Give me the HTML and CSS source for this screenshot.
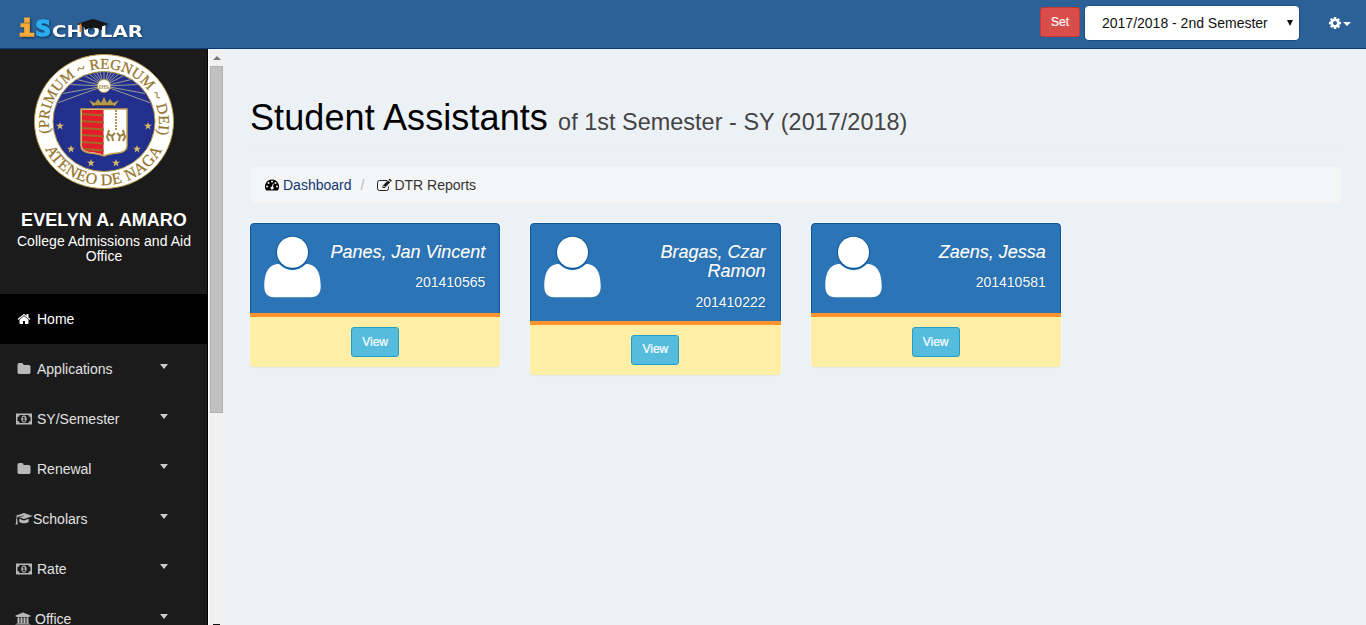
FILE: index.html
```html
<!DOCTYPE html>
<html lang="en">
<head>
<meta charset="utf-8">
<title>iScholar</title>
<link rel="stylesheet" href="styles.css">
</head>
<body>
<svg class="defs" aria-hidden="true">
  <symbol id="folder" viewBox="0 0 1792 1792"><path d="M1728 608v704q0 92-66 158t-158 66h-1216q-92 0-158-66t-66-158v-960q0-92 66-158t158-66h320q92 0 158 66t66 158v32h672q92 0 158 66t66 158z"/></symbol>
  <symbol id="home" viewBox="0 0 1792 1792"><path d="M1472 992v480q0 26-19 45t-45 19h-384v-384h-256v384h-384q-26 0-45-19t-19-45v-480q0-1 .5-3t.5-3l575-474 575 474q1 2 1 6zm223-69l-62 74q-8 9-21 11h-3q-13 0-21-7l-692-577-692 577q-12 8-24 7-13-2-21-11l-62-74q-8-10-7-23.5t11-21.5l719-599q32-26 76-26t76 26l244 204v-195q0-14 9-23t23-9h192q14 0 23 9t9 23v408l219 182q10 8 11 21.5t-7 23.5z"/></symbol>
  <symbol id="cog" viewBox="0 0 1792 1792"><path d="M1152 896q0-106-75-181t-181-75-181 75-75 181 75 181 181 75 181-75 75-181zm512-109v222q0 12-8 23t-20 13l-185 28q-19 54-39 91 35 50 107 138 10 12 10 25t-9 23q-27 37-99 108t-94 71q-12 0-26-9l-138-108q-44 23-91 38-16 136-29 186-7 28-36 28h-222q-14 0-24.5-8.5t-11.5-21.5l-28-184q-49-16-90-37l-141 107q-10 9-25 9-14 0-25-11-126-114-165-168-7-10-7-23 0-12 8-23 15-21 51-66.5t54-70.5q-27-50-41-99l-183-27q-13-2-21-12.5t-8-23.5v-222q0-12 8-23t19-13l186-28q14-46 39-92-40-57-107-138-10-12-10-24 0-10 9-23 26-36 98.5-107.5t94.5-71.5q13 0 26 10l138 107q44-23 91-38 16-136 29-186 7-28 36-28h222q14 0 24.5 8.5t11.5 21.5l28 184q49 16 90 37l142-107q9-9 24-9 13 0 25 10 129 119 165 170 7 8 7 22 0 12-8 23-15 21-51 66.5t-54 70.5q26 50 41 98l183 28q13 2 21 12.5t8 23.5z"/></symbol>
  <symbol id="money" viewBox="0 0 16 14"><path fill-rule="evenodd" d="M0 1.500h16v11H0zM3.600 3Q3.400 4.800 1.500 5V9Q3.400 9.200 3.600 11H12.400Q12.600 9.200 14.500 9V5Q12.600 4.800 12.400 3z"/><path fill-rule="evenodd" d="M8 3.500c3.600 0 3.600 7 0 7s-3.600-7 0-7zM7.600 4.700 6.400 5.600l.4.600.6-.3v2.400h-.9v.9h3v-.9h-.9V4.700z"/></symbol>
  <symbol id="cap" viewBox="0 0 18 14"><path d="M9 1 17.800 4 9 7 4 5.300 9 4.100 8.700 3.600 3 4.800Q2.100 5.500 2.100 7.300 2.900 8 2.300 8.800L2.800 12.500H.6L1.200 8.800Q.6 8 1.300 7.300 1.300 5.800 2 4.500L.2 4zM4.400 6.800 9 8.400 13.600 6.800 13.800 9.500Q13 11.300 9 11.300T4.200 9.500z"/></symbol>
  <symbol id="bank" viewBox="0 0 16 14"><path d="M8 .5 15.500 3.500v1H14.500V5H1.500v-.5H.5v-1zM2.500 5.500h2v5.500h1V5.500h2v5.500h1V5.500h2v5.500h1V5.500h2V11h.8v.8H1.700V11h.8zM.5 12.500h15V14H.5z"/></symbol>
  <symbol id="gauge" viewBox="0 0 14 14"><path fill-rule="evenodd" d="M7 1.500a7 7 0 0 1 5.900 10.800q-.2.300-.5.300H1.600q-.3 0-.5-.3A7 7 0 0 1 7 1.500zM7 2.500a1 1 0 1 0 0 2 1 1 0 0 0 0-2zM3.500 4a1 1 0 1 0 0 2 1 1 0 0 0 0-2zM2 7.500a1 1 0 1 0 0 2 1 1 0 0 0 0-2zM10.500 4a1 1 0 1 0 0 2 1 1 0 0 0 0-2zM12 7.500a1 1 0 1 0 0 2 1 1 0 0 0 0-2zM7.900 5.600 7 8.500A1.500 1.500 0 1 0 8 8.800l.7-3z"/></symbol>
  <symbol id="edit" viewBox="0 0 15 14"><path d="M11.500 8.500V10.500a2 2 0 0 1-2 2h-7a2 2 0 0 1-2-2v-6a2 2 0 0 1 2-2h7.500" fill="none" stroke="currentColor"/><path fill-rule="evenodd" d="M11 2.200 13.200 4.400 7.700 9.900H5.500V7.700zM11.600 1.600 12.300.9Q12.800.5 13.300 1l1.200 1.200q.4.500 0 1L13.800 3.900zM6.300 8v1.100h1.100l.4-.5L6.800 7.600z"/></symbol>
  <symbol id="user" viewBox="0 0 57 62"><path d="M15 28Q28.500 40.500 42 28C53 28 56.700 38 56.700 50Q56.700 61.200 47 61.200H10Q.3 61.200.3 50C.3 38 4 28 15 28z"/><circle cx="28.500" cy="16.500" r="16.500" fill="#0b5698"/><circle cx="28.500" cy="16.300" r="15.500"/></symbol>
  <symbol id="star" viewBox="-5 -5 10 10"><path d="M0-4 1-1.200H4L1.600.5 2.500 3.500 0 1.700-2.500 3.500-1.600.5-4-1.200H-1z"/></symbol>
</svg>

<header class="navbar">
  <svg class="logo" width="130" height="26" viewBox="0 0 130 26" role="img" aria-label="iScholar">
    <g class="logo-text">
      <text class="logo-i" transform="translate(-1.200 20.200) scale(1.200 1)">i</text>
      <text class="logo-s" transform="translate(15.400 20.200) scale(1.180 1)">S</text>
      <text class="logo-rest" x="32" y="21" textLength="91" lengthAdjust="spacingAndGlyphs">CHOLAR</text>
    </g>
    <path d="M57 8 73 3 88.500 8 82 10.500V14Q73 9.500 65 14V11z" fill="#151515"/>
    <path d="M60.500 7.500V16" stroke="#e68620" stroke-width="2"/>
  </svg>
  <div class="nav-tools">
    <button class="btn btn-danger">Set</button>
    <div class="select"><span>2017/2018 - 2nd Semester</span><svg width="6" height="7" viewBox="0 0 6 7"><path d="M0 0h6L3 6z"/></svg></div>
    <div class="settings"><svg width="14" height="14"><use href="#cog"/></svg><i class="caret"></i></div>
  </div>
</header>

<div class="body">
  <aside class="sidebar">
    <div class="profile">
      <svg class="seal" width="140" height="136" viewBox="0 0 140 136" role="img" aria-label="Ateneo de Naga seal">
        <defs>
          <path id="arc-top" d="M16 79A55 54 0 1 1 124 79"/>
          <path id="arc-bottom" d="M10.800 94A65 63 0 0 0 129.200 94"/>
          <clipPath id="disc"><ellipse cx="70" cy="68" rx="50" ry="50"/></clipPath>
        </defs>
        <ellipse cx="70" cy="67.500" rx="69.500" ry="67" fill="#fff" stroke="#b79a48"/>
        <ellipse cx="70" cy="67.500" rx="51" ry="50" fill="#222f8c" stroke="#b79a48"/>
        <g clip-path="url(#disc)" stroke="#b9b79a" stroke-width=".8">
          <path d="M70 32 15 52M70 32 15 42M70 32 24 30M70 32 28 22M70 32 36 14M70 32 43 10M70 32 50 8M70 32 57 8M70 32 63 8M70 32V8M70 32 77 8M70 32 83 8M70 32 90 8M70 32 97 10M70 32 104 14M70 32 112 22M70 32 116 30M70 32 125 42M70 32 125 52"/>
        </g>
        <circle cx="70" cy="32" r="6.500" fill="#fff" stroke="#b79a48"/>
        <text class="ihs" x="70" y="34.500">IHS</text>
        <path d="M55 46 61 49 64 45 67 49 70 43 73 49 76 45 79 49 85 46 81 52H59z" fill="#b79a48"/><path d="M60 51.500h20" stroke="#624f24"/>
        <path d="M47 55H93V92Q93 98 84 99 74 100 70 102 66 100 56 99 47 98 47 92z" fill="#fff" stroke="#c3a34d" stroke-width="1.500"/>
        <path d="M48 56H69.500V101Q66 99 56 98 48 97 48 92z" fill="#e51c2a"/>
        <path d="M48 60 70 61.500M48 67 70 68.500M48 74 70 75.500M48 81 70 82.500M48 88 70 89.500M50 95 70 96.500" stroke="#a06a28" stroke-width="1.800"/>
        <path d="M82 56V77" stroke="#92783b" stroke-width="1.500" stroke-dasharray="2 1"/>
        <path d="M75 76 74 80 78 82 79 87M74 80 73 83 75 87M78 82 81 79M89 76 90 80 86 82 85 87M90 80 91 83 89 87M86 82 83 79" fill="none" stroke="#9b8243" stroke-width="2"/>
        <g fill="#d7b966"><use href="#star" x="21" y="67" width="10" height="10"/><use href="#star" x="109" y="67" width="10" height="10"/><use href="#star" x="32" y="90" width="10" height="10"/><use href="#star" x="98" y="90" width="10" height="10"/><use href="#star" x="52" y="104" width="10" height="10"/><use href="#star" x="77" y="104" width="10" height="10"/></g>
        <text class="seal-text"><textPath href="#arc-top" textLength="193" lengthAdjust="spacing">(PRIMUM ~ REGNUM ~ DEI)</textPath></text>
        <text class="seal-text seal-bottom"><textPath href="#arc-bottom" startOffset="1" textLength="144" lengthAdjust="spacing">ATENEO DE NAGA</textPath></text>
      </svg>
      <h2>EVELYN A. AMARO</h2>
      <p>College Admissions and Aid Office</p>
    </div>
    <nav class="menu">
      <a class="item active"><svg class="ic"><use href="#home"/></svg><span>Home</span></a>
      <a class="item"><svg class="ic"><use href="#folder"/></svg><span>Applications</span><i class="caret"></i></a>
      <a class="item"><svg class="ic"><use href="#money"/></svg><span>SY/Semester</span><i class="caret"></i></a>
      <a class="item"><svg class="ic"><use href="#folder"/></svg><span>Renewal</span><i class="caret"></i></a>
      <a class="item tight"><svg class="ic"><use href="#cap"/></svg><span>Scholars</span><i class="caret"></i></a>
      <a class="item"><svg class="ic"><use href="#money"/></svg><span>Rate</span><i class="caret"></i></a>
      <a class="item office"><svg class="ic"><use href="#bank"/></svg><span>Office</span><i class="caret"></i></a>
    </nav>
  </aside>
  <div class="scrollbar"><i class="arrow"></i><div class="thumb"></div><div class="arrow-end"></div></div>
  <main class="content">
    <h1>Student Assistants <small>of 1st Semester - SY (2017/2018)</small></h1>
    <div class="breadcrumb">
      <svg class="crumb-icon" width="14" height="14"><use href="#gauge"/></svg><a>Dashboard</a><span class="slash">/</span><svg width="15" height="14"><use href="#edit"/></svg><span class="current">DTR Reports</span>
    </div>
    <div class="cards">
      <section class="card">
        <div class="card-head"><svg width="57" height="62"><use href="#user"/></svg><div class="who"><h4>Panes, Jan Vincent</h4><p>201410565</p></div></div>
        <div class="card-foot"><button class="btn btn-info">View</button></div>
      </section>
      <section class="card">
        <div class="card-head"><svg width="57" height="62"><use href="#user"/></svg><div class="who"><h4>Bragas, Czar Ramon</h4><p>201410222</p></div></div>
        <div class="card-foot"><button class="btn btn-info">View</button></div>
      </section>
      <section class="card">
        <div class="card-head"><svg width="57" height="62"><use href="#user"/></svg><div class="who"><h4>Zaens, Jessa</h4><p>201410581</p></div></div>
        <div class="card-foot"><button class="btn btn-info">View</button></div>
      </section>
    </div>
  </main>
</div>
</body>
</html>
```
FILE: styles.css
```css
* { box-sizing: border-box; }
body { margin: 0; height: 625px; overflow: hidden; background: #ecf1f6; color: #222; font: 14px/20px "Liberation Sans", Arial, sans-serif; }
h1, h2, h4, p { margin: 0; }
svg { fill: currentColor; flex: none; }
.defs { position: absolute; width: 0; height: 0; }

.navbar { height: 49px; display: flex; justify-content: space-between; background: #2c6197; border-bottom: 1px solid #083b78; }
.logo { margin: 16px 0 0 20px; filter: drop-shadow(1px 1px 1px #103358); overflow: visible; }
.logo-i, .logo-s { font: bold 21.5px "DejaVu Sans Mono", monospace; stroke-width: 1.6; }
.logo-i { fill: #ffab36; stroke: #ffab36; }
.logo-s { fill: #29aef0; stroke: #29aef0; }
.logo-rest { font: bold 16px "DejaVu Sans", sans-serif; fill: #fff; }
.nav-tools { display: flex; align-items: flex-start; padding: 6px 15px 0 0; }
.btn { height: 30px; padding: 0 0 1px; font: 12px "Liberation Sans", Arial, sans-serif; color: #fff; border-radius: 3px; border: 1px solid; -webkit-text-stroke: .2px #fff; }
.btn-danger { width: 40px; margin: 1px 5px 0 0; background: #d94e4b; border-color: #cc3634; }
.select { width: 214px; height: 34px; display: flex; align-items: center; justify-content: space-between; padding: 0 6px 0 17px; background: #fff; border-radius: 4px; color: #111; box-shadow: 0 0 0 1px #195089; }
.settings { display: flex; align-items: center; height: 34px; margin-left: 29px; color: #fff; }
.caret { width: 0; height: 0; border: 4px solid transparent; border-top-color: currentColor; border-bottom: 0; }
.settings .caret { margin-left: 1px; margin-top: 2px; }

.body { display: flex; height: 576px; }
.sidebar { width: 208px; flex: none; background: #1b1b1b; border-right: 1px solid #000; overflow: hidden; color: #fff; }
.profile { height: 245px; padding: 5px 11px 0 12px; text-align: center; }
.seal { display: block; margin: 0 auto 20px 22px; }
.seal-text { font: 15px "Liberation Serif", serif; fill: #95752b; stroke: #95752b; stroke-width: .25; }
.seal-bottom { font-size: 16px; }
.ihs { font: bold 6px "Liberation Serif", serif; fill: #a68c48; text-anchor: middle; }
.profile h2 { font-size: 18px; line-height: 20px; letter-spacing: .05px; }
.profile p { line-height: 15px; margin-top: 4px; letter-spacing: .05px; }
.item { height: 50px; display: flex; align-items: center; padding: 0 39px 0 16px; color: #e2e2e2; }
.ic { width: 16px; height: 14px; margin-right: 5px; color: #b8b8b8; }
.item .caret { margin: -5px 0 0 auto; border-width: 5px 4px 0; border-top-color: #ccc; }
.active { background: #000; color: #fff; }
.active .ic { color: #fff; }
.tight .ic { width: 18px; margin: 0 0 0 -1px; }
.office .ic { margin: 0 4px 0 -1px; }

.scrollbar { width: 16px; flex: none; display: flex; flex-direction: column; align-items: center; background: #f1f1f2; border-left: 1px solid #fff; padding-top: 7px; }
.arrow { width: 0; height: 0; flex: none; border: 4px solid transparent; border-top: 0; border-bottom-color: #777; }
.thumb { width: 13px; height: 347px; margin-top: 6px; flex: none; background: #c1c1c1; border: 1px solid #b2b2b2; }
.arrow-end { width: 7px; height: 1px; margin-top: auto; background: #111; }

.content { flex: 1; padding: 49px 25px 0 26px; }
h1 { height: 49px; padding-bottom: 9px; border-bottom: 1px solid #eceeef; font-size: 36px; line-height: 40px; font-weight: 400; color: #000; white-space: nowrap; letter-spacing: .1px; }
h1 small { font-size: 23.4px; color: #444; letter-spacing: .04px; }
.breadcrumb { height: 36px; margin: 20px 0; padding: 0 15px; display: flex; align-items: center; background: #f4f5f7; border-radius: 4px; }
.breadcrumb a { color: #12376f; margin-left: 4px; }
.crumb-icon { color: #000; }
.slash { color: #bbb; margin: 0 13px 0 9px; }
.current { margin-left: 2px; color: #333; }
.cards { display: grid; grid-template-columns: repeat(4, 1fr); gap: 30px; align-items: start; }
.card { border-radius: 4px; overflow: hidden; box-shadow: 0 1px 1px rgba(0,0,0,.08), 0 0 0 1px #f3f8fc; }
.card-head { min-height: 90px; display: flex; justify-content: space-between; padding: 12px 14px 9px 13px; color: #fff; background: #2b74b6; border: solid #0b5698; border-width: 1px 1px 0; border-radius: 4px 4px 0 0; }
.who { width: 166px; padding-top: 7px; text-align: right; text-shadow: 0 0 1px #064a88; }
.who h4 { font-size: 18px; line-height: 19.4px; font-weight: 400; font-style: italic; -webkit-text-stroke: .2px #fff; }
.who p { margin-top: 10px; line-height: 20px; }
.card-foot { height: 54px; border-top: 4px solid #fe922c; padding-top: 10px; text-align: center; background: #ffeea5; }
.btn-info { width: 48px; background: #55bcde; border-color: #259dc4; }
```
